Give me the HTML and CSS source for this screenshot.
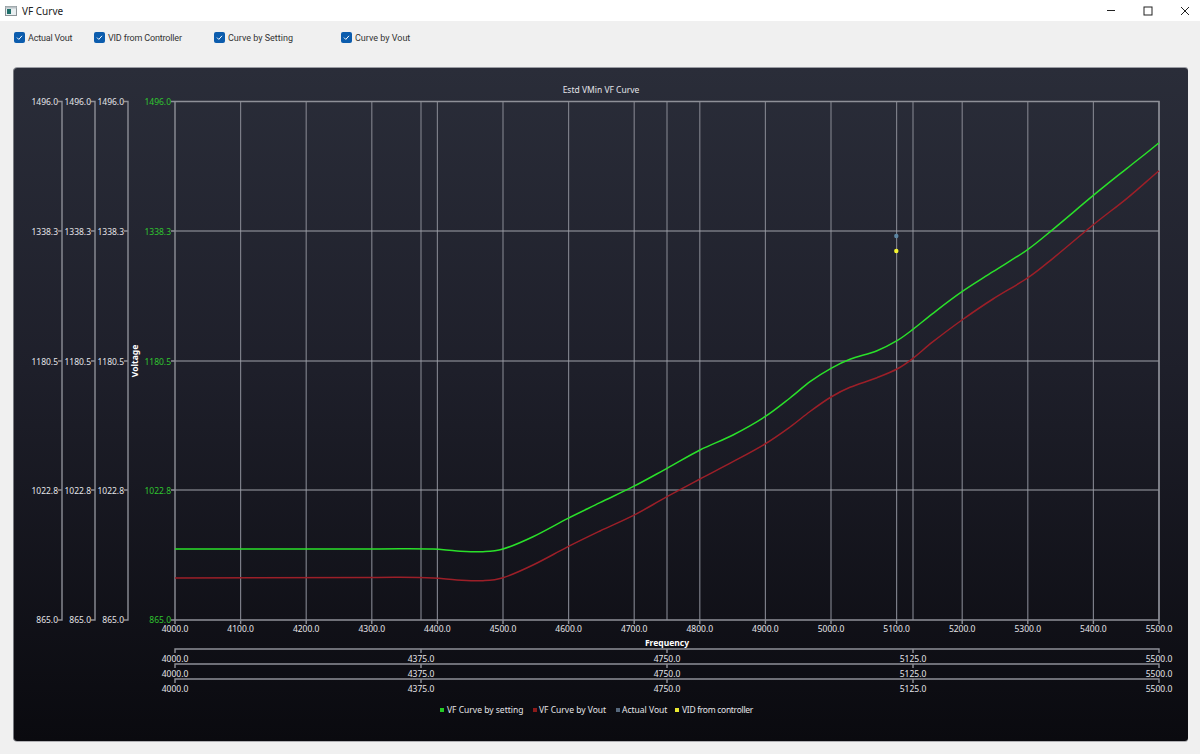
FILE: index.html
```html
<!DOCTYPE html>
<html lang="en">
<head>
    <meta charset="UTF-8">
    <title>VF Curve</title>
    <link rel="stylesheet" href="styles.css">
</head>
<body>
    <div class="titlebar">
        <svg class="app-icon" width="12" height="10" viewBox="0 0 12 10">
            <rect x="0.5" y="0.5" width="11" height="9" fill="#e8eef0" stroke="#8a9296"/>
            <rect x="2" y="3" width="4" height="5" fill="#1f6f6a"/>
            <rect x="0.5" y="0.5" width="11" height="2" fill="#b9c2c6"/>
        </svg>
        <span class="title">VF Curve</span>
        <div class="win-controls">
            <svg width="10" height="10" viewBox="0 0 10 10"><path d="M1 4.5H9" class="win-line"/></svg>
            <svg width="10" height="10" viewBox="0 0 10 10"><rect x="1" y="1" width="8" height="8" class="win-line"/></svg>
            <svg width="10" height="10" viewBox="0 0 10 10"><path d="M1 1L9 9M9 1L1 9" class="win-line"/></svg>
        </div>
    </div>

    <div class="toolbar">
        <label class="check w-actual"><span class="box"><svg width="11" height="11" viewBox="0 0 11 11"><path d="M3 5.6L4.8 7.4L8 3.8"/></svg></span>Actual Vout</label>
        <label class="check w-vid"><span class="box"><svg width="11" height="11" viewBox="0 0 11 11"><path d="M3 5.6L4.8 7.4L8 3.8"/></svg></span>VID from Controller</label>
        <label class="check w-setting"><span class="box"><svg width="11" height="11" viewBox="0 0 11 11"><path d="M3 5.6L4.8 7.4L8 3.8"/></svg></span>Curve by Setting</label>
        <label class="check"><span class="box"><svg width="11" height="11" viewBox="0 0 11 11"><path d="M3 5.6L4.8 7.4L8 3.8"/></svg></span>Curve by Vout</label>
    </div>

    <div class="chart-card">
        <svg class="chart" width="1174" height="673" viewBox="14 68 1174 673">
            <text x="601" y="93" class="lbl mid">Estd VMin VF Curve</text>

            <!-- grid -->
            <path class="grid-v" d="M240.6 101V620M306.2 101V620M371.8 101V620M437.4 101V620M503 101V620M568.6 101V620M634.2 101V620M699.8 101V620M765.4 101V620M831 101V620M896.6 101V620M962.2 101V620M1027.8 101V620M1093.4 101V620M1159 101V620"/>
            <path class="grid-v" d="M421 101V620M667 101V620M913 101V620"/>
            <path class="grid-h" d="M175 231H1159M175 361H1159M175 490H1159"/>

            <!-- left axes -->
            <path class="axis" d="M58 101.5H62V620H58M58 231H62M58 361H62M58 490H62"/>
            <path class="axis" d="M91 101.5H95V620H91M91 231H95M91 361H95M91 490H95"/>
            <path class="axis" d="M124 101.5H128V620H124M124 231H128M124 361H128M124 490H128"/>
            <path class="axis" d="M171 101.5H1159V620M171 231H175M171 361H175M171 490H175M171 620H1159M175 101.5V624M240.6 620V624M306.2 620V624M371.8 620V624M437.4 620V624M503 620V624M568.6 620V624M634.2 620V624M699.8 620V624M765.4 620V624M831 620V624M896.6 620V624M962.2 620V624M1027.8 620V624M1093.4 620V624M1159 620V624"/>

            <g class="lbl end">
                <text x="58" y="105">1496.0</text><text x="58" y="234.5">1338.3</text><text x="58" y="364.5">1180.5</text><text x="58" y="494">1022.8</text><text x="58" y="623">865.0</text>
                <text x="91" y="105">1496.0</text><text x="91" y="234.5">1338.3</text><text x="91" y="364.5">1180.5</text><text x="91" y="494">1022.8</text><text x="91" y="623">865.0</text>
                <text x="124" y="105">1496.0</text><text x="124" y="234.5">1338.3</text><text x="124" y="364.5">1180.5</text><text x="124" y="494">1022.8</text><text x="124" y="623">865.0</text>
            </g>
            <g class="lbl end green">
                <text x="171" y="105">1496.0</text><text x="171" y="234.5">1338.3</text><text x="171" y="364.5">1180.5</text><text x="171" y="494">1022.8</text><text x="171" y="623">865.0</text>
            </g>
            <text class="lbl bold mid" transform="translate(138 361) rotate(-90)">Voltage</text>

            <!-- main x axis labels -->
            <g class="lbl mid">
                <text x="175" y="632">4000.0</text><text x="240.6" y="632">4100.0</text><text x="306.2" y="632">4200.0</text><text x="371.8" y="632">4300.0</text><text x="437.4" y="632">4400.0</text><text x="503" y="632">4500.0</text><text x="568.6" y="632">4600.0</text><text x="634.2" y="632">4700.0</text><text x="699.8" y="632">4800.0</text><text x="765.4" y="632">4900.0</text><text x="831" y="632">5000.0</text><text x="896.6" y="632">5100.0</text><text x="962.2" y="632">5200.0</text><text x="1027.8" y="632">5300.0</text><text x="1093.4" y="632">5400.0</text><text x="1159" y="632">5500.0</text>
            </g>
            <text x="667" y="645.5" class="lbl bold mid">Frequency</text>

            <!-- extra x axes -->
            <path class="axis" d="M175 653V649H1159V653M421 649V653M667 649V653M913 649V653"/>
            <path class="axis" d="M175 668V664H1159V668M421 664V668M667 664V668M913 664V668"/>
            <path class="axis" d="M175 683V679H1159V683M421 679V683M667 679V683M913 679V683"/>
            <g class="lbl mid">
                <text x="175" y="662">4000.0</text><text x="421" y="662">4375.0</text><text x="667" y="662">4750.0</text><text x="913" y="662">5125.0</text><text x="1159" y="662">5500.0</text>
                <text x="175" y="677">4000.0</text><text x="421" y="677">4375.0</text><text x="667" y="677">4750.0</text><text x="913" y="677">5125.0</text><text x="1159" y="677">5500.0</text>
                <text x="175" y="692">4000.0</text><text x="421" y="692">4375.0</text><text x="667" y="692">4750.0</text><text x="913" y="692">5125.0</text><text x="1159" y="692">5500.0</text>
            </g>

            <!-- curves -->
            <path class="curve c-setting" d="M175 549L370 549S389.5 548.7 400 548.7S423.5 548.6 433 549S448.7 550.6 457 551S475.3 552 483 551.7S494.7 551.5 503 549S522.2 541.8 533 536.7S556.8 524 568 518.3S589.2 508 600 502.7S621.8 492.4 633 486.7S655.8 474.4 667 468.3S689 455.6 700 450S722.2 440.6 733 435S755.5 422.9 765 416.7S782.5 403.8 790 398S803.2 386.7 810 381.7S824.3 372 831 368.3S842.3 362.2 850 359.3S869.2 353.8 877 350.7S891 344.3 897 340.7S907 333.9 913 329.3S924.8 319.6 933 313.3S952 298.6 962 291.7S982 278.8 993 271.7S1018 256.4 1028 249.3S1042.2 238.2 1053 229.3S1080.7 205.9 1093 195.7S1116 177.1 1127 168.3S1148 152 1159 142.7"/>
            <path class="curve c-vout" d="M175 578L370 577.5S389.5 577.2 400 577.3S423.5 577.6 433 578S448.7 579.6 457 580S475.3 581.1 483 580.7S494.7 580.3 503 577.7S522.2 570.2 533 565S556.8 552.4 568 546.7S589.2 536.2 600 531S621.8 521.4 633 515.7S655.8 502.8 667 496.7S689 484.8 700 479S722.2 467.5 733 461.7S755.5 449.8 765 444S782.5 432.4 790 427S803.2 416.5 810 411.500S824.3 401 831 397S842.3 390.5 850 387.3S869.2 380.8 877 377.7S891 372.2 897 369S907 362.9 913 358.3S924.8 348.1 933 341.7S952 327.1 962 320S982 306 993 299S1018 284.5 1028 277.7S1042.2 267.1 1053 258.3S1080.7 235 1093 225S1116 207.3 1127 198.3S1148 180 1159 170.7"/>
            <circle cx="896.3" cy="236" r="2.2" fill="#5d86a3"/>
            <circle cx="896.3" cy="251" r="2.2" fill="#f5f530"/>

            <!-- legend -->
            <rect x="440" y="708" width="4" height="4" fill="#25c925"/>
            <text x="447" y="713" class="lbl">VF Curve by setting</text>
            <rect x="533" y="708" width="4" height="4" fill="#8c1a1a"/>
            <text x="539" y="713" class="lbl">VF Curve by Vout</text>
            <rect x="616" y="708" width="4" height="4" fill="#56687c"/>
            <text x="622" y="713" class="lbl">Actual Vout</text>
            <rect x="675" y="708" width="4" height="4" fill="#e8e830"/>
            <text x="682" y="713" class="lbl tight">VID from controller</text>
        </svg>
    </div>
</body>
</html>
```

FILE: styles.css
```css
body {
    margin: 0;
    width: 1200px;
    height: 754px;
    overflow: hidden;
    background-color: #f0f0f0;
    font-family: "Noto Sans", Arial, sans-serif;
    color: #222;
}
.titlebar {
    display: flex;
    align-items: center;
    height: 21px;
    background-color: white;
    padding-left: 5px;
    box-sizing: border-box;
}
.app-icon {
    margin-right: 5px;
}
.title {
    font-size: 10px;
}
.win-controls {
    display: flex;
    gap: 27px;
    margin-left: auto;
    margin-right: 10px;
}
.win-line {
    fill: none;
    stroke: #222;
    stroke-width: 1;
}
.toolbar {
    display: flex;
    align-items: center;
    height: 47px;
    padding-left: 14px;
    padding-bottom: 14px;
    box-sizing: border-box;
}
.check {
    display: flex;
    align-items: center;
    font-family: Roboto, Arial, sans-serif;
    font-size: 9px;
    color: #333;
}
.w-actual { width: 80px; letter-spacing: -0.2px; }
.w-vid { width: 120px; letter-spacing: -0.16px; }
.w-setting { width: 127px; }
.box {
    display: block;
    width: 11px;
    height: 11px;
    margin-right: 3px;
    background-color: #0b5cad;
    border-radius: 2px;
}
.box svg {
    display: block;
}
.box path {
    fill: none;
    stroke: white;
    stroke-width: 1;
}
.chart-card {
    width: 1174px;
    height: 673px;
    margin-left: 14px;
    border-radius: 3px;
    background: linear-gradient(180deg, #2a2d39 0%, #1e1f2a 45%, #0a0a0f 100%);
    box-shadow: 0 -1px 0 #9a9ca3, -1px 0 0 #77797f, 0 1px 0 #b0b0b4;
    overflow: hidden;
}
.chart {
    display: block;
}
.lbl {
    font-size: 8.5px;
    fill: #e4e4e8;
    font-family: "Noto Sans", Arial, sans-serif;
}
.end text, text.end {
    text-anchor: end;
}
.mid, .mid text {
    text-anchor: middle;
}
.green {
    fill: #2fc42f;
}
.bold {
    font-weight: bold;
    fill: white;
}
.tight {
    letter-spacing: -0.3px;
}
.grid-v {
    fill: none;
    stroke: #7b7d87;
    stroke-width: 1.2;
}
.grid-h {
    fill: none;
    stroke: #a0a2a9;
    stroke-width: 1.2;
}
.axis {
    fill: none;
    stroke: #8e9098;
    stroke-width: 1.4;
}
.curve {
    fill: none;
    stroke-width: 1.5;
    stroke-linejoin: round;
}
.c-setting {
    stroke: #2ae02a;
}
.c-vout {
    stroke: #9c1f28;
}
```
